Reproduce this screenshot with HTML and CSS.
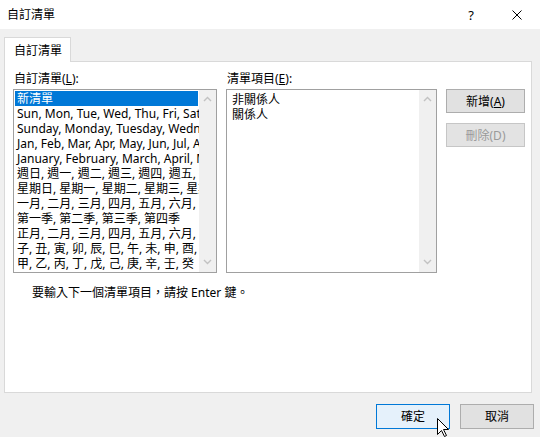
FILE: index.html
```html
<!DOCTYPE html>
<html>
<head>
    <title>自訂清單</title>
    <link rel="stylesheet" href="styles.css">
</head>
<body>
    <div class="dialog">
        <div class="titlebar">
            <span class="title">自訂清單</span>
            <span class="tb-btn help">?</span>
            <span class="tb-btn close">
                <svg width="10" height="10" viewBox="0 0 10 10"><path d="M0.5 0.5 L9.5 9.5 M9.5 0.5 L0.5 9.5" stroke="#000" stroke-width="1" fill="none"/></svg>
            </span>
        </div>

        <div class="tabs">
            <div class="tab">自訂清單</div>
        </div>

        <div class="panel">
            <div class="lists">
                <div class="col">
                    <div class="label">自訂清單(<u>L</u>):</div>
                    <div class="listbox">
                        <div class="items">
                            <div class="row selected">新清單</div>
                            <div class="row">Sun, Mon, Tue, Wed, Thu, Fri, Sat</div>
                            <div class="row">Sunday, Monday, Tuesday, Wednesday</div>
                            <div class="row">Jan, Feb, Mar, Apr, May, Jun, Jul, Aug</div>
                            <div class="row">January, February, March, April, May</div>
                            <div class="row">週日, 週一, 週二, 週三, 週四, 週五, 週六</div>
                            <div class="row">星期日, 星期一, 星期二, 星期三, 星期四</div>
                            <div class="row">一月, 二月, 三月, 四月, 五月, 六月, 七月</div>
                            <div class="row">第一季, 第二季, 第三季, 第四季</div>
                            <div class="row">正月, 二月, 三月, 四月, 五月, 六月, 七月</div>
                            <div class="row">子, 丑, 寅, 卯, 辰, 巳, 午, 未, 申, 酉, 戌</div>
                            <div class="row">甲, 乙, 丙, 丁, 戊, 己, 庚, 辛, 壬, 癸</div>
                        </div>
                        <div class="scroll">
                            <svg width="9" height="6" viewBox="0 0 9 6"><path d="M1 5 L4.5 1.5 L8 5" stroke="#c2c2c2" stroke-width="1.4" fill="none"/></svg>
                            <svg width="9" height="6" viewBox="0 0 9 6"><path d="M1 1 L4.5 4.5 L8 1" stroke="#c2c2c2" stroke-width="1.4" fill="none"/></svg>
                        </div>
                    </div>
                </div>

                <div class="col">
                    <div class="label">清單項目(<u>E</u>):</div>
                    <div class="listbox entries">
                        <div class="items">
                            <div class="row">非關係人</div>
                            <div class="row">關係人</div>
                        </div>
                        <div class="scroll">
                            <svg width="9" height="6" viewBox="0 0 9 6"><path d="M1 5 L4.5 1.5 L8 5" stroke="#c2c2c2" stroke-width="1.4" fill="none"/></svg>
                            <svg width="9" height="6" viewBox="0 0 9 6"><path d="M1 1 L4.5 4.5 L8 1" stroke="#c2c2c2" stroke-width="1.4" fill="none"/></svg>
                        </div>
                    </div>
                </div>

                <div class="col actions">
                    <button class="btn">新增(<u>A</u>)</button>
                    <button class="btn" disabled>刪除(D)</button>
                </div>
            </div>

            <div class="hint">要輸入下一個清單項目，請按 Enter 鍵。</div>
        </div>

        <div class="footer">
            <button class="btn default">確定</button>
            <button class="btn">取消</button>
        </div>

        <!-- mouse pointer resting over the OK button -->
        <svg class="pointer" width="13" height="20" viewBox="0 0 13 20">
            <path d="M0.5 0.5 L0.5 16.5 L4.5 12.5 L7.5 18.5 L9.5 17.5 L6.5 11.5 L11.5 11.5 Z" fill="#fff" stroke="#000" stroke-width="1" stroke-linejoin="miter"/>
        </svg>
    </div>
</body>
</html>
```

FILE: styles.css
```css
* { margin: 0; padding: 0; box-sizing: border-box; }
body { width: 540px; height: 437px; overflow: hidden; background: #f0f0f0; font-family: "Segoe UI", "Noto Sans", "Noto Sans CJK TC", sans-serif; font-size: 12px; color: #000; }
.dialog { position: relative; height: 437px; }

.titlebar { height: 29px; background: #fff; display: flex; align-items: center; padding-left: 7px; }
.title { flex: 1; line-height: 15px; }
.tb-btn { width: 46px; height: 29px; display: flex; align-items: center; justify-content: center; }
.help { font-size: 13px; }

.tabs { padding: 8px 0 0 4px; display: flex; }
.tab { width: 67px; height: 25px; margin-bottom: -1px; background: #fff; border: 1px solid #d9d9d9; border-bottom: none; padding: 5px 0 0 9px; line-height: 15px; position: relative; z-index: 1; }

.panel { margin: 0 8px 0 4px; height: 332px; background: #fff; border: 1px solid #d9d9d9; padding: 9px 0 0 8px; }
.lists { display: flex; gap: 9px; }
.col { display: flex; flex-direction: column; }
.label { line-height: 15px; padding-left: 1px; margin-bottom: 3px; }
.listbox { display: flex; width: 204px; height: 184px; border: 1px solid #a0a0a0; background: #fff; }
.listbox.entries { width: 211px; }
.items { flex: 1; overflow: hidden; padding: 1px; white-space: nowrap; }
.entries .items { padding: 2px 3px; }
.row { height: 15px; line-height: 15px; padding-left: 2px; }
.row.selected { background: #0078d7; color: #fff; }
.scroll { width: 17px; background: #f0f0f0; display: flex; flex-direction: column; justify-content: space-between; align-items: center; padding: 6px 0 7px; }

.actions { margin-top: 18px; gap: 10px; }
.btn { width: 79px; height: 24px; background: #e1e1e1; border: 1px solid #adadad; font: inherit; color: #000; line-height: 15px; }
.btn:disabled { background: #e3e3e3; border-color: #c6c6c6; color: #9a9a9a; }

.hint { margin-top: 12px; padding-left: 19px; line-height: 15px; }

.footer { display: flex; justify-content: flex-end; gap: 10px; padding: 11px 6px 0 0; }
.footer .btn { width: 74px; height: 25px; }
.btn.default { background: #e5f1fb; border-color: #0078d7; }

.pointer { position: absolute; left: 437px; top: 418px; }
```
